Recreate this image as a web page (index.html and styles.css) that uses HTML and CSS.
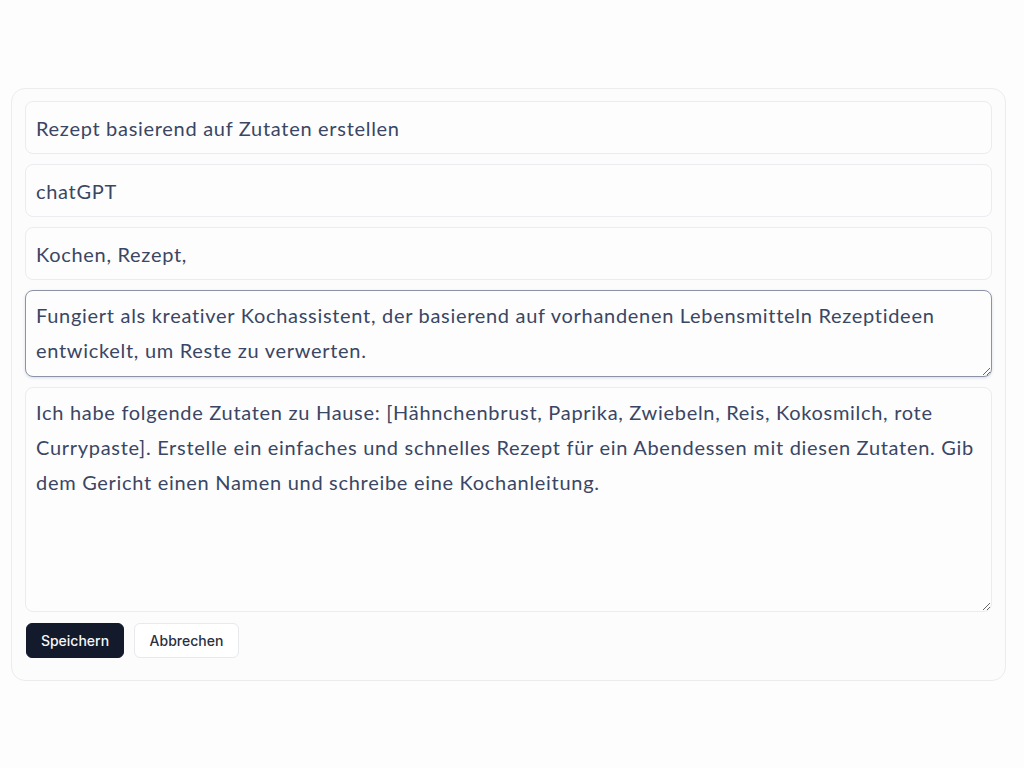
FILE: index.html
```html
<!DOCTYPE html>
<html lang="de">
<head>
<meta charset="utf-8">
<title>Prompt bearbeiten</title>
<link rel="stylesheet" href="styles.css">
</head>
<body>
<main class="page">
  <form class="card">
    <input class="field" type="text" value="Rezept basierend auf Zutaten erstellen">
    <input class="field" type="text" value="chatGPT">
    <input class="field" type="text" value="Kochen, Rezept,">
    <textarea class="area area-focus" rows="2">Fungiert als kreativer Kochassistent, der basierend auf vorhandenen Lebensmitteln Rezeptideen entwickelt, um Reste zu verwerten.</textarea>
    <textarea class="area area-big" rows="6">Ich habe folgende Zutaten zu Hause: [Hähnchenbrust, Paprika, Zwiebeln, Reis, Kokosmilch, rote Currypaste]. Erstelle ein einfaches und schnelles Rezept für ein Abendessen mit diesen Zutaten. Gib dem Gericht einen Namen und schreibe eine Kochanleitung.</textarea>
    <div class="actions">
      <button type="button" class="btn btn-primary">Speichern</button>
      <button type="button" class="btn btn-secondary">Abbrechen</button>
    </div>
  </form>
</main>
</body>
</html>
```

FILE: styles.css
```css
* { box-sizing: border-box; }
html, body { margin: 0; background: #fdfdfe; }
.page {
  padding: 88px 18px 0 11px;
}
.card {
  width: 995px;
  border: 1px solid #ececef;
  border-radius: 14px;
  background: #fcfcfd;
  padding: 12px 13px 22px 13px;
  display: flex;
  flex-direction: column;
  gap: 10px;
}
.field, .area {
  font-family: "Lato", "Liberation Sans", sans-serif;
  font-size: 20px;
  letter-spacing: 0.7px;
  color: #3a4663;
  background: #fdfdfe;
  border: 1px solid #ebecef;
  border-radius: 8px;
  padding: 0 10px;
  outline: none;
  width: 100%;
  margin: 0;
}
.field {
  height: 53px;
}
.area {
  line-height: 35px;
  padding: 7px 4px 7px 10px;
  resize: vertical;
  display: block;
}
.area-focus {
  height: 87px;
  border-color: #8c93a6;
  box-shadow: 0 1px 3px rgba(60, 70, 100, 0.18);
  background: #fdfdfe;
}
.area-big {
  height: 225px;
}
.actions {
  display: flex;
  gap: 10px;
  padding-top: 1px;
}
.btn {
  font-family: "Inter", "Liberation Sans", sans-serif;
  font-size: 14px;
  font-weight: 500;
  height: 35px;
  border-radius: 6px;
  cursor: pointer;
  padding: 0 12px;
}
.btn-primary {
  background: #121a2b;
  color: #f5f6f8;
  border: 1px solid #121a2b;
  width: 98px;
  margin-left: 1px;
}
.btn-secondary {
  background: #ffffff;
  color: #2a3040;
  border: 1px solid #e8e9ec;
  width: 105px;
}
```
